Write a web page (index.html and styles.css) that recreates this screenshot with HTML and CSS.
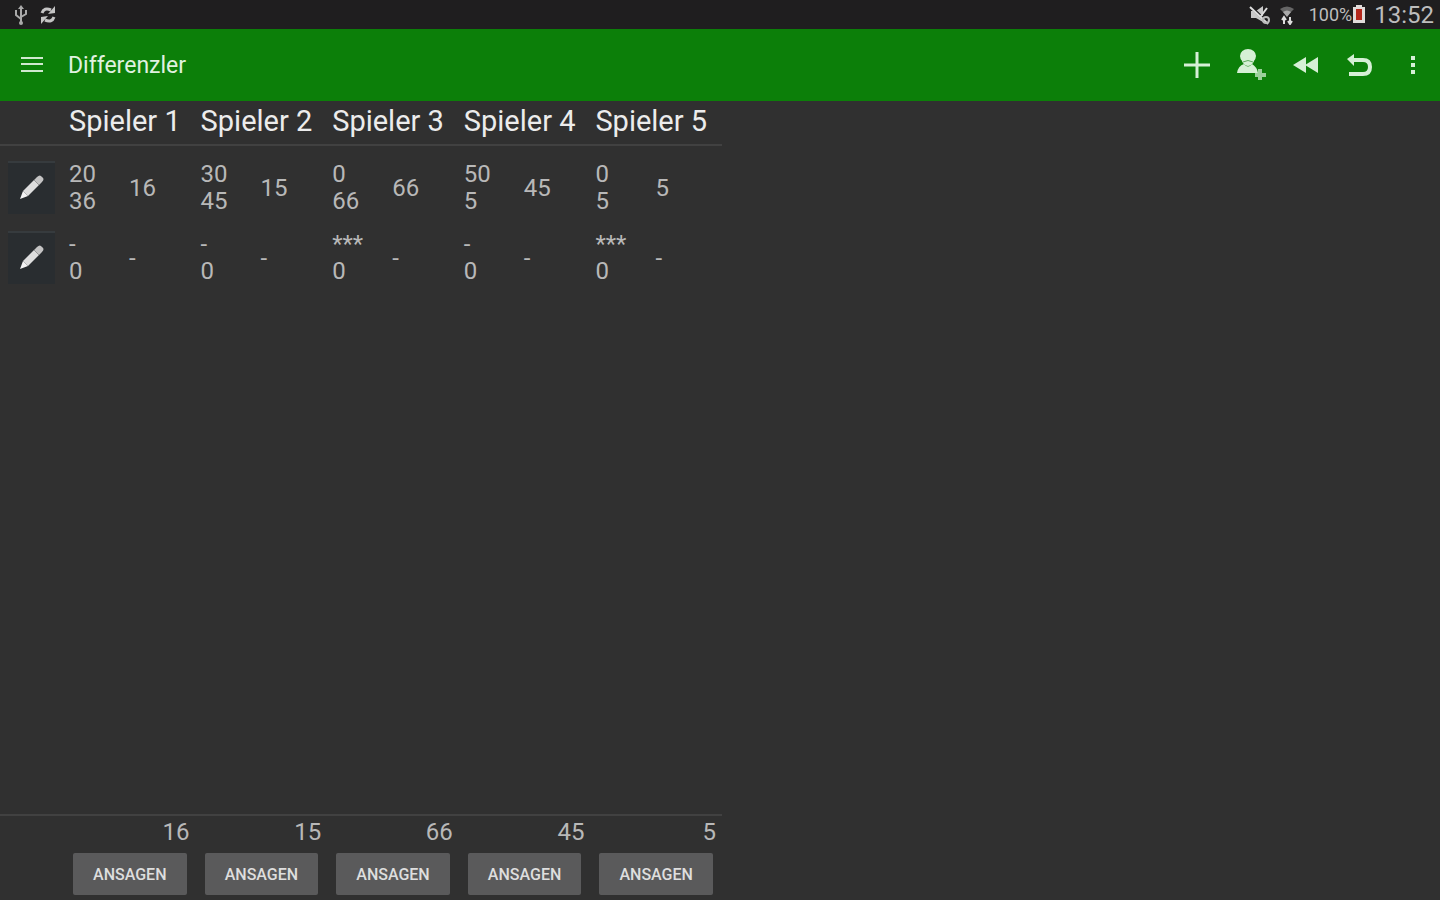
FILE: index.html
```html
<!DOCTYPE html>
<html lang="de">
<head>
  <meta charset="UTF-8" />
  <meta name="viewport" content="width=device-width, initial-scale=1.0" />
  <title>Differenzler</title>
  <link rel="stylesheet" href="styles.css">
</head>
<body>
  <!-- shared icon -->
  <svg class="defs" aria-hidden="true">
    <symbol id="pencil" viewBox="0 0 28 28">
      <path d="M2 25 L5 17 L10 22 Z" fill="#f4f4f4"/>
      <path d="M5 17 L16 6 L21 11 L10 22 Z" fill="#dedede"/>
      <path d="M16 6 L19 3 Q22 0 24 3 Q27 5 24 8 L21 11 Z" fill="#c4c4c4"/>
      <path d="M16 6 L21 11" stroke="#999" stroke-width="1"/>
    </symbol>
  </svg>

  <div class="status">
    <svg width="14" height="22" viewBox="0 0 14 22" fill="none" stroke="#aaa" stroke-width="2">
      <path d="M7 4 V19 M2 7 V11 L7 15 M12 7 V10 L7 13"/>
      <path d="M4 5 L7 1 L10 5 Z M1 6 H3 V8 H1 Z M11 6 H13 V8 H11 Z" fill="#aaa" stroke="none"/>
      <circle cx="7" cy="19" r="2" fill="#aaa" stroke="none"/>
    </svg>
    <svg width="16" height="20" viewBox="0 0 16 20" fill="none" stroke="#c4c4c4" stroke-width="3">
      <path d="M2 8 Q4 2 11 5"/>
      <path d="M14 12 Q12 18 5 15"/>
      <path d="M8 9 L15 8 L15 1 Z M8 11 L1 12 L1 19 Z" fill="#c4c4c4" stroke="none"/>
    </svg>
    <div class="status-right">
      <svg width="22" height="20" viewBox="0 0 22 20">
        <path d="M2 6 H7 L14 1 V17 L7 13 H2 Z" fill="#c8c8c8"/>
        <path d="M1 1 L20 19" stroke="#1f1e1f" stroke-width="3"/>
        <path d="M1 2 L19 19 M18 3 L12 11" stroke="#ddd" stroke-width="2"/>
        <circle cx="17" cy="15" r="3" fill="none" stroke="#bbb" stroke-width="2"/>
      </svg>
      <svg class="wifi" width="16" height="20" viewBox="0 0 16 20" fill="none">
        <path d="M1 4 Q8 -1 15 4 L8 11 Z" fill="#666"/>
        <path d="M4 7 Q8 4 12 7 L8 12 Z" fill="#aaa"/>
        <path d="M5 19 V13 M3 15 L5 12 L7 15 M11 12 V18 M9 16 L11 19 L13 16" stroke="#ddd" stroke-width="2"/>
      </svg>
      <span class="percent">100%</span>
      <svg width="14" height="20" viewBox="0 0 14 20">
        <path d="M4 0 H10 V2 H13 V18 H1 V2 H4 Z" fill="#e2dcda"/>
        <path d="M4 4 H10 V15 H4 Z" fill="#b5281c"/>
      </svg>
      <span class="clock">13:52</span>
    </div>
  </div>

  <header class="appbar">
    <button class="menu" aria-label="Menü">
      <svg width="24" height="20" viewBox="0 0 24 20" stroke="#cfe8cf" stroke-width="2">
        <path d="M1 3 H23 M1 9 H23 M1 16 H23"/>
      </svg>
    </button>
    <h1>Differenzler</h1>
    <div class="actions">
      <button aria-label="Neue Runde">
        <svg width="32" height="32" viewBox="0 0 32 32" stroke="#d6f0d6" stroke-width="3">
          <path d="M16 3 V29 M3 16 H29"/>
        </svg>
      </button>
      <button aria-label="Spieler hinzufügen">
        <svg width="32" height="32" viewBox="0 0 32 32">
          <ellipse cx="13" cy="7" rx="8" ry="7" fill="#d6f0d6"/>
          <path d="M6 9 H20 Q18 17 13 17 Q8 17 6 9 Z" fill="#d6f0d6"/>
          <path d="M8 13 Q13 10 18 13" fill="none" stroke="#5cab5c" stroke-width="1"/>
          <path d="M2 24 Q3 17 9 15 Q13 20 17 15 Q22 18 23 24 Z" fill="#d6f0d6"/>
          <path d="M25 20 V31 M20 26 H31" stroke="#9cd09c" stroke-width="4"/>
        </svg>
      </button>
      <button aria-label="Zurückspulen">
        <svg width="32" height="32" viewBox="0 0 32 32" fill="#d6f0d6">
          <path d="M4 16 L17 8 V24 Z M16 16 L29 8 V24 Z"/>
        </svg>
      </button>
      <button aria-label="Rückgängig">
        <svg width="32" height="32" viewBox="0 0 32 32" fill="none" stroke="#d6f0d6" stroke-width="4">
          <path d="M8 11 H20 Q27 11 27 18 Q27 25 20 25 H6"/>
          <path d="M4 10 L11 5 V17 Z" fill="#d6f0d6" stroke="none"/>
        </svg>
      </button>
      <button aria-label="Mehr">
        <svg width="32" height="32" viewBox="0 0 32 32" fill="#d6f0d6">
          <path d="M14 7 H18 V11 H14 Z M14 14 H18 V18 H14 Z M14 21 H18 V25 H14 Z"/>
        </svg>
      </button>
    </div>
  </header>

  <main>
    <table class="scores">
      <thead>
        <tr>
          <th class="edit"></th>
          <th>Spieler 1</th>
          <th>Spieler 2</th>
          <th>Spieler 3</th>
          <th>Spieler 4</th>
          <th>Spieler 5</th>
        </tr>
      </thead>
      <tbody>
        <tr>
          <td class="edit"><button aria-label="Bearbeiten"><svg width="28" height="28"><use href="#pencil"/></svg></button></td>
          <td><div class="score"><span>20<br>36</span><span>16</span></div></td>
          <td><div class="score"><span>30<br>45</span><span>15</span></div></td>
          <td><div class="score"><span>0<br>66</span><span>66</span></div></td>
          <td><div class="score"><span>50<br>5</span><span>45</span></div></td>
          <td><div class="score"><span>0<br>5</span><span>5</span></div></td>
        </tr>
        <tr>
          <td class="edit"><button aria-label="Bearbeiten"><svg width="28" height="28"><use href="#pencil"/></svg></button></td>
          <td><div class="score"><span>-<br>0</span><span>-</span></div></td>
          <td><div class="score"><span>-<br>0</span><span>-</span></div></td>
          <td><div class="score"><span>***<br>0</span><span>-</span></div></td>
          <td><div class="score"><span>-<br>0</span><span>-</span></div></td>
          <td><div class="score"><span>***<br>0</span><span>-</span></div></td>
        </tr>
      </tbody>
    </table>

    <table class="totals">
      <tr>
        <td class="edit"></td>
        <td>16</td>
        <td>15</td>
        <td>66</td>
        <td>45</td>
        <td>5</td>
      </tr>
      <tr class="bid">
        <td class="edit"></td>
        <td><button>ANSAGEN</button></td>
        <td><button>ANSAGEN</button></td>
        <td><button>ANSAGEN</button></td>
        <td><button>ANSAGEN</button></td>
        <td><button>ANSAGEN</button></td>
      </tr>
    </table>
  </main>
</body>
</html>
```
FILE: styles.css
```css
* {
  box-sizing: border-box;
}
body {
  margin: 0;
  min-height: 100vh;
  display: flex;
  flex-direction: column;
  font-family: Roboto, "Noto Sans", sans-serif;
  background: #303030;
  color: #b8b8b8;
}
button {
  border: 0;
  padding: 0;
  background: none;
  color: inherit;
  font-family: inherit;
  cursor: pointer;
}
svg {
  display: block;
}
.defs {
  display: none;
}

/* Status bar */
.status {
  height: 29px;
  padding: 0 6px 0 14px;
  display: flex;
  align-items: center;
  gap: 12px;
  background: #1f1e1f;
  color: #bdbdbd;
}
.status-right {
  margin-left: auto;
  display: flex;
  align-items: center;
}
.wifi {
  margin: 0 14px 0 8px;
}
.percent {
  font-size: 18px;
}
.clock {
  margin-left: 8px;
  font-size: 24px;
}

/* App bar */
.appbar {
  height: 72px;
  display: flex;
  align-items: center;
  background: #0c7f09;
  color: #e0f2e0;
}
.appbar button {
  display: flex;
  justify-content: center;
  align-items: center;
  height: 48px;
}
.appbar .menu {
  width: 64px;
}
h1 {
  margin: 0 0 0 4px;
  font-size: 23px;
  font-weight: 400;
}
.actions {
  margin-left: auto;
  display: flex;
}
.actions button {
  width: 54px;
}

/* Tables */
main {
  flex: 1;
  display: flex;
  flex-direction: column;
  justify-content: space-between;
}
table {
  width: 722px;
  table-layout: fixed;
  border-collapse: separate;
  border-spacing: 0;
  font-size: 24px;
  line-height: 27px;
}
th, td {
  padding: 0 0 0 5px;
  text-align: left;
}
.edit {
  width: 64px;
  padding: 0 0 0 8px;
}
.scores th {
  height: 45px;
  padding-bottom: 2px;
  border-bottom: 2px solid #414141;
  font-size: 29px;
  font-weight: 400;
  color: #ececec;
}
.scores td {
  height: 70px;
}
.scores tbody::before {
  content: "";
  display: block;
  height: 6px;
}
.score {
  display: flex;
  align-items: center;
  padding-top: 2px;
}
.score span:first-child {
  width: 60px;
}
.edit button {
  width: 47px;
  height: 53px;
  display: flex;
  justify-content: center;
  align-items: center;
  background: #292d30;
  border-top: 2px solid #363b3e;
}

/* Totals */
.totals td {
  padding-right: 6px;
  border-top: 2px solid #414141;
  height: 34px;
  text-align: right;
}
.totals .bid td {
  height: 52px;
  padding: 0 9px;
  border: 0;
  vertical-align: middle;
}
.bid button {
  display: block;
  width: 100%;
  height: 42px;
  border-radius: 2px;
  background: #5a5a5b;
  color: #dedede;
  font-size: 16px;
  font-weight: 500;
}
```
